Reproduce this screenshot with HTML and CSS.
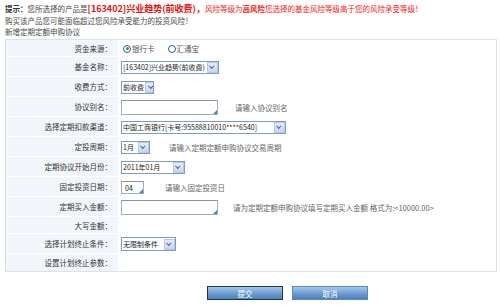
FILE: index.html
```html
<!DOCTYPE html>
<html lang="zh-CN">
<head>
    <meta charset="UTF-8">
    <title>新增定期定额申购协议</title>
    <link rel="stylesheet" href="styles.css">
</head>
<body>

<div class="notice">
    <p class="line first"><b class="tip">提示：</b>您所选择的产品是<b class="fund">[163402]兴业趋势(前收费)，</b><span class="risk">风险等级为<b>高风险</b>您选择的基金风险等级高于您的风险承受等级！</span></p>
    <p class="line">购买该产品您可能面临超过您风险承受能力的投资风险！</p>
    <p class="line">新增定期定额申购协议</p>
</div>

<div class="form">
    <div class="label short">资金来源：</div>
    <div class="field short">
        <span class="radio checked"></span><span class="opt">银行卡</span>
        <span class="radio"></span><span class="opt">汇通宝</span>
    </div>

    <div class="label">基金名称：</div>
    <div class="field"><span class="select w-fund"><span class="val">[163402]兴业趋势(前收费)</span><span class="arrow"></span></span></div>

    <div class="label">收费方式：</div>
    <div class="field"><span class="select w-fee"><span class="val">前收费</span><span class="arrow"></span></span></div>

    <div class="label">协议别名：</div>
    <div class="field"><span class="input w-long"></span><span class="hint hint-alias">请输入协议别名</span></div>

    <div class="label">选择定期扣款渠道：</div>
    <div class="field"><span class="select w-bank"><span class="val">中国工商银行[卡号:95588810010****6540]</span><span class="arrow"></span></span></div>

    <div class="label">定投周期：</div>
    <div class="field"><span class="select w-month"><span class="val">1月</span><span class="arrow"></span></span><span class="hint hint-cycle">请输入定期定额申购协议交易周期</span></div>

    <div class="label">定期协议开始月份：</div>
    <div class="field"><span class="select w-start"><span class="val">2011年01月</span><span class="arrow"></span></span></div>

    <div class="label">固定投资日期：</div>
    <div class="field"><span class="input w-day">04</span><span class="hint hint-day">请输入固定投资日</span></div>

    <div class="label">定期买入金额：</div>
    <div class="field"><span class="input w-long"></span><span class="hint hint-amount">请为定期定额申购协议填写定期买入金额 格式为:&lt;10000.00&gt;</span></div>

    <div class="label short">大写金额：</div>
    <div class="field short"></div>

    <div class="label">选择计划终止条件：</div>
    <div class="field"><span class="select w-stop"><span class="val">无限制条件</span><span class="arrow"></span></span></div>

    <div class="label short last">设置计划终止参数：</div>
    <div class="field short last"></div>
</div>

<div class="actions">
    <button class="btn focus">提交</button>
    <button class="btn">取消</button>
</div>

</body>
</html>
```

FILE: styles.css
```css
body {
    margin: 0;
    padding: 2px 3px 0 5px;
    font-family: "Noto Sans CJK SC", sans-serif;
    font-size: 7.5px;
    color: #4a4a4a;
    background-color: #fff;
}

.notice {
    height: 37px;
}

.line {
    margin: 0;
    height: 11px;
    line-height: 11px;
    white-space: nowrap;
}

.line.first {
    height: 13px;
    line-height: 13px;
}

.tip {
    color: #333;
}

.fund {
    font-size: 9px;
    color: #e8110d;
}

.risk {
    color: #f01b14;
}

/* form grid */
.form {
    display: grid;
    grid-template-columns: 112px 1fr;
    border: 1px solid #d8e3ec;
}

.label,
.field {
    display: flex;
    align-items: center;
    height: 20px;
    box-sizing: border-box;
}

.label {
    justify-content: flex-end;
    padding-right: 6px;
    background-color: #f2f6fa;
    border-bottom: 1px solid #fff;
    color: #333;
}

.field {
    padding-left: 3px;
    white-space: nowrap;
}

.short {
    height: 17px;
}

.last {
    border-bottom: none;
}

/* radios */
.radio {
    width: 6px;
    height: 6px;
    border: 1px solid #2b5d95;
    border-radius: 50%;
    background: #fff;
    margin: 0 1px 0 2px;
    position: relative;
}

.radio.checked::after {
    content: "";
    position: absolute;
    left: 1.5px;
    top: 1.5px;
    width: 3px;
    height: 3px;
    border-radius: 50%;
    background: #28a03c;
}

.opt {
    margin-right: 11px;
    color: #555;
}

/* fake selects */
.select {
    display: inline-flex;
    align-items: center;
    height: 13px;
    box-sizing: border-box;
    border: 1px solid #7f9db9;
    background: #fff;
    color: #222;
    font-size: 7px;
    overflow: hidden;
}

.select .val {
    flex: 1;
    padding-left: 1px;
    white-space: nowrap;
}

.select .arrow {
    width: 9px;
    height: 9px;
    margin: 0 0.5px 0 1px;
    border: 1px solid #b7c9e4;
    background: linear-gradient(#e6eefc, #c5d5f0);
    position: relative;
    flex: none;
}

.select .arrow::after {
    content: "";
    position: absolute;
    left: 2.5px;
    top: 1.5px;
    width: 2.5px;
    height: 2.5px;
    border-right: 1.3px solid #4d6185;
    border-bottom: 1.3px solid #4d6185;
    transform: rotate(45deg);
}

.w-fund { width: 98px; }
.w-fee { width: 33px; }
.w-bank { width: 165px; }
.w-month { width: 29px; }
.w-start { width: 64px; }
.w-stop { width: 55px; height: 14px; }

/* text inputs */
.input {
    display: inline-block;
    height: 14px;
    line-height: 12px;
    box-sizing: border-box;
    border: 1px solid #a5acb5;
    border-top-color: #8c939c;
    background: #fff;
    padding-left: 3px;
    font-size: 7px;
    color: #222;
    position: relative;
}

.input::after {
    content: "";
    position: absolute;
    right: 0;
    bottom: 0;
    width: 0;
    height: 0;
    border-left: 4px solid transparent;
    border-bottom: 4px solid #3d86d6;
}

.w-long { width: 97px; height: 15px; }
.w-day { width: 23px; height: 13px; }

.hint {
    color: #666;
}

.hint-alias { margin-left: 17px; }
.hint-cycle { margin-left: 19px; }
.hint-day { margin-left: 21px; }
.hint-amount { margin-left: 15px; }

/* buttons */
.actions {
    display: flex;
    gap: 9px;
    padding: 14px 0 0 202px;
}

.btn {
    width: 76px;
    height: 14px;
    padding: 0;
    border: 1px solid #5b86b8;
    background: linear-gradient(#a5c8ec, #6c9bd0 55%, #4e7fb8);
    color: #fff;
    font-family: "Noto Sans CJK SC", sans-serif;
    font-size: 7.5px;
    cursor: pointer;
}

.btn.focus {
    border-color: #1d3553;
}
```
